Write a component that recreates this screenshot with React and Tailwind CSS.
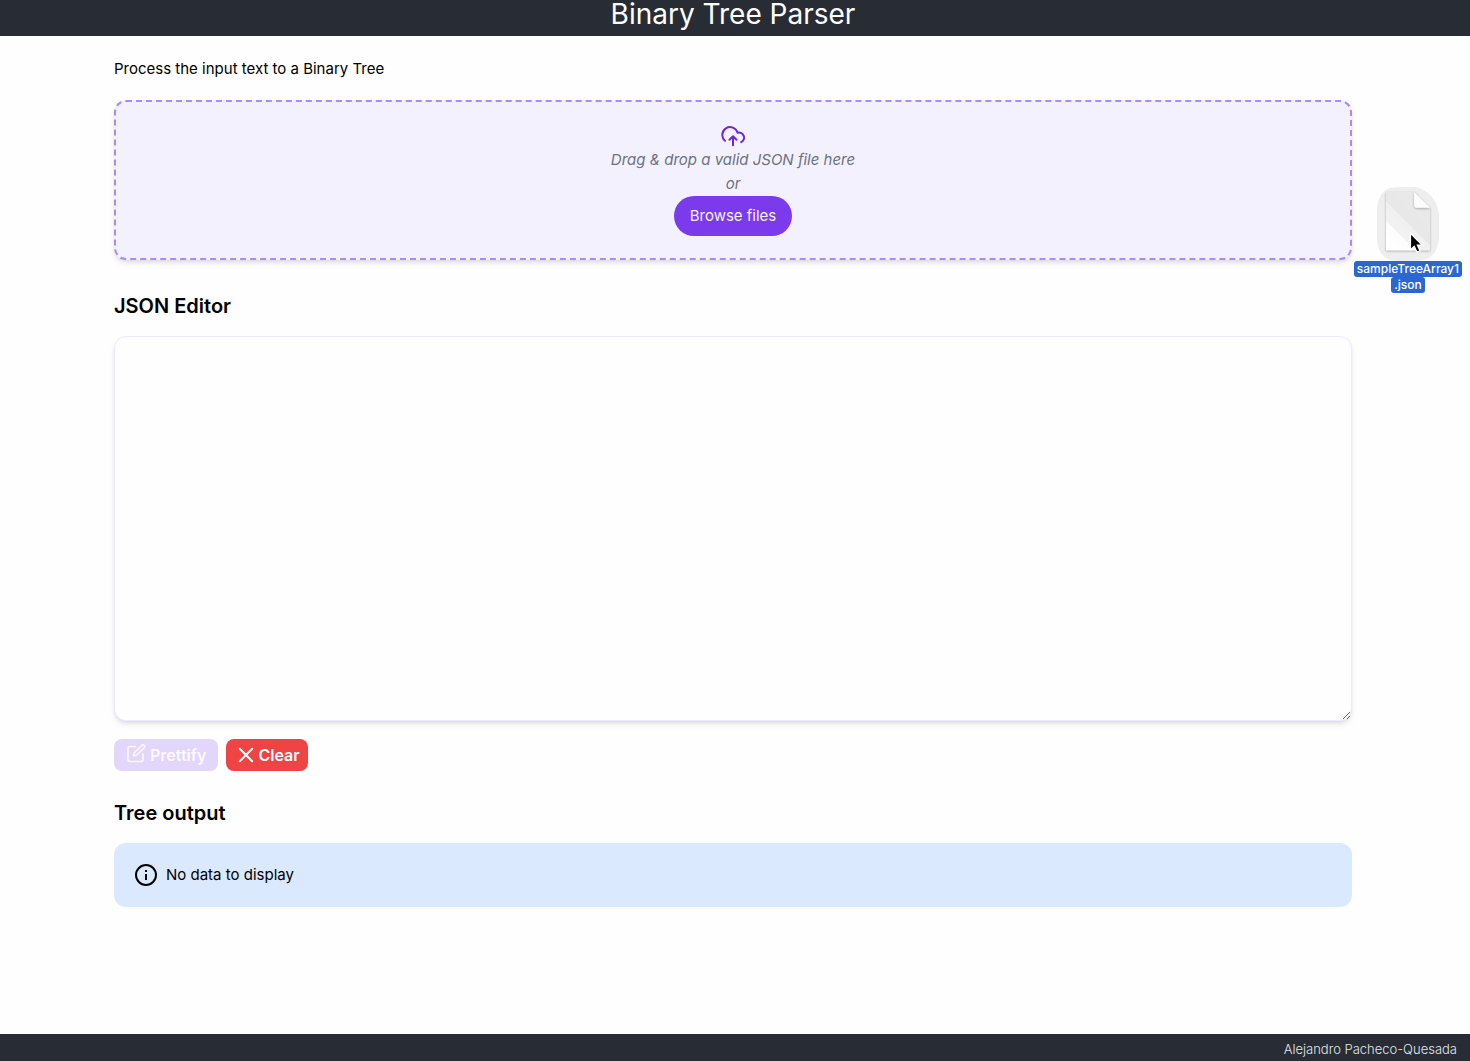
import React from "react";

const stroke = { fill: "none", stroke: "currentColor", strokeLinecap: "round", strokeLinejoin: "round" };

function UploadIcon() {
  return (
    <svg aria-hidden="true" viewBox="0 0 24 24" className="h-6 w-6 text-[#6d28d9]" {...stroke} strokeWidth="2">
      <path d="M4 16.8A7.8 7.8 0 1 1 16.6 8.8A5 5 0 0 1 20.2 18.1" />
      <path d="M12 21.200V12.400M8.500 15.800L12 12.300l3.500 3.500" />
    </svg>
  );
}

function EditIcon() {
  return (
    <svg aria-hidden="true" viewBox="0 0 20 20" className="mb-1 h-5 w-5" {...stroke} strokeWidth="1.6">
      <path d="M9.5 3.5H4A2 2 0 0 0 2 5.500V16.500A2 2 0 0 0 4 18.500H15A2 2 0 0 0 17 16.500V11" />
      <path d="M7.500 13L8.200 9.800L15.800 2.200A1.700 1.700 0 0 1 18.200 4.600L10.600 12.200Z" />
    </svg>
  );
}

function ClearIcon() {
  return (
    <svg aria-hidden="true" viewBox="0 0 20 20" className="h-5 w-5" {...stroke} strokeWidth="2">
      <path d="M3.800 3.800L16.200 16.200M16.200 3.800L3.800 16.200" />
    </svg>
  );
}

function InfoIcon() {
  return (
    <svg aria-hidden="true" viewBox="0 0 24 24" className="h-6 w-6" fill="none" stroke="currentColor" strokeWidth="2">
      <circle cx="12" cy="12" r="10" />
      <path d="M12 11v6M12 7v2" />
    </svg>
  );
}

function DraggedFile() {
  return (
    <div className="absolute top-[186px] right-2 flex flex-col items-center">
      <svg aria-hidden="true" viewBox="0 0 64 76" preserveAspectRatio="none" className="h-[75px] w-16">
        <defs>
          <linearGradient id="paper" gradientUnits="userSpaceOnUse" x1="14" y1="58" x2="49" y2="23">
            <stop offset="0" stopColor="#fff" />
            <stop offset=".26" stopColor="#fcfcfc" />
            <stop offset=".27" stopColor="#f2f2f2" />
            <stop offset=".54" stopColor="#f0f0f0" />
            <stop offset=".55" stopColor="#e8e8e8" />
            <stop offset="1" stopColor="#e9e9e9" />
          </linearGradient>
          <filter id="shade" x="-20%" y="-20%" width="140%" height="140%">
            <feDropShadow dx="0" dy="1" stdDeviation="1" floodOpacity=".3" />
          </filter>
        </defs>
        <path d="M20 1H40C53 5 61 14 63 28V54C61 69 54 75 42 76H20C8 75 2 68 1 55V23C2 9 8 2 20 1Z" fill="#eee" />
        <path d="M10 6H38L54 22V65H10Z" fill="url(#paper)" filter="url(#shade)" />
        <path d="M38 6L54 22H41Q38 22 38 19Z" fill="#fcfcfc" filter="url(#shade)" />
        <path d="M34.500 48V64.500L38.300 61L41 67L44 65.600L41.300 59.800H46Z" fill="#000" stroke="#fff" strokeWidth="1.200" />
      </svg>
      <span className="rounded-[3px] bg-[#2967d2] px-[3px] text-[12px] leading-4 font-medium text-white">sampleTreeArray1</span>
      <span className="rounded-[3px] bg-[#2967d2] px-[3px] text-[12px] leading-4 font-medium text-white">.json</span>
    </div>
  );
}

export default function App() {
  return (
    <div className="relative flex min-h-screen flex-col bg-[#fefefe] font-['Inter',sans-serif] text-[15px] leading-6 text-black">
      <header className="flex h-9 items-start justify-center bg-[#282c34] pr-1 text-white">
        <h1 className="text-[28px] leading-7">Binary Tree Parser</h1>
      </header>

      <main className="mr-1 flex flex-1 flex-col px-[114px] pt-[21px]">
        <p>Process the input text to a Binary Tree</p>

        <section className="mt-[19px] flex h-40 flex-col items-center justify-center rounded-xl border-2 border-dashed border-[#a78bfa] bg-[#f4f1ff] shadow-md">
          <UploadIcon />
          <p className="text-[#6b7280] italic">Drag &amp; drop a valid JSON file here</p>
          <p className="text-[#6b7280] italic">or</p>
          <button type="button" className="h-10 rounded-full bg-[#7c3aed] px-4 text-violet-50">Browse files</button>
        </section>

        <h2 className="mt-8 text-[20px] leading-7 font-semibold">
          <label htmlFor="json">JSON Editor</label>
        </h2>
        <textarea id="json" className="mt-4 h-[385px] w-full resize rounded-xl border border-violet-100 bg-[#fefefe] p-3 shadow-md outline-none" />

        <div className="mt-[18px] flex gap-2">
          <button type="button" disabled className="flex h-8 items-center gap-1 rounded-lg bg-[#e2d6fb] px-3 text-[16px] font-semibold text-[#fbf9ff]">
            <EditIcon />
            Prettify
          </button>
          <button type="button" className="flex h-8 items-center gap-0.5 rounded-lg bg-[#ef4444] pr-2 pl-2.5 text-[16px] font-semibold text-white">
            <ClearIcon />
            Clear
          </button>
        </div>

        <h2 className="mt-7 text-[20px] leading-7 font-semibold">Tree output</h2>
        <div className="mt-4 flex h-16 items-center gap-2 rounded-xl bg-[#dbe9fe] px-5">
          <InfoIcon />
          <p>No data to display</p>
        </div>
      </main>

      <footer className="bg-[#282c34] pt-[5px] pr-[13px] pb-0.5 text-right text-[13px] leading-5 font-light text-gray-200">
        Alejandro Pacheco-Quesada
      </footer>

      <DraggedFile />
    </div>
  );
}
